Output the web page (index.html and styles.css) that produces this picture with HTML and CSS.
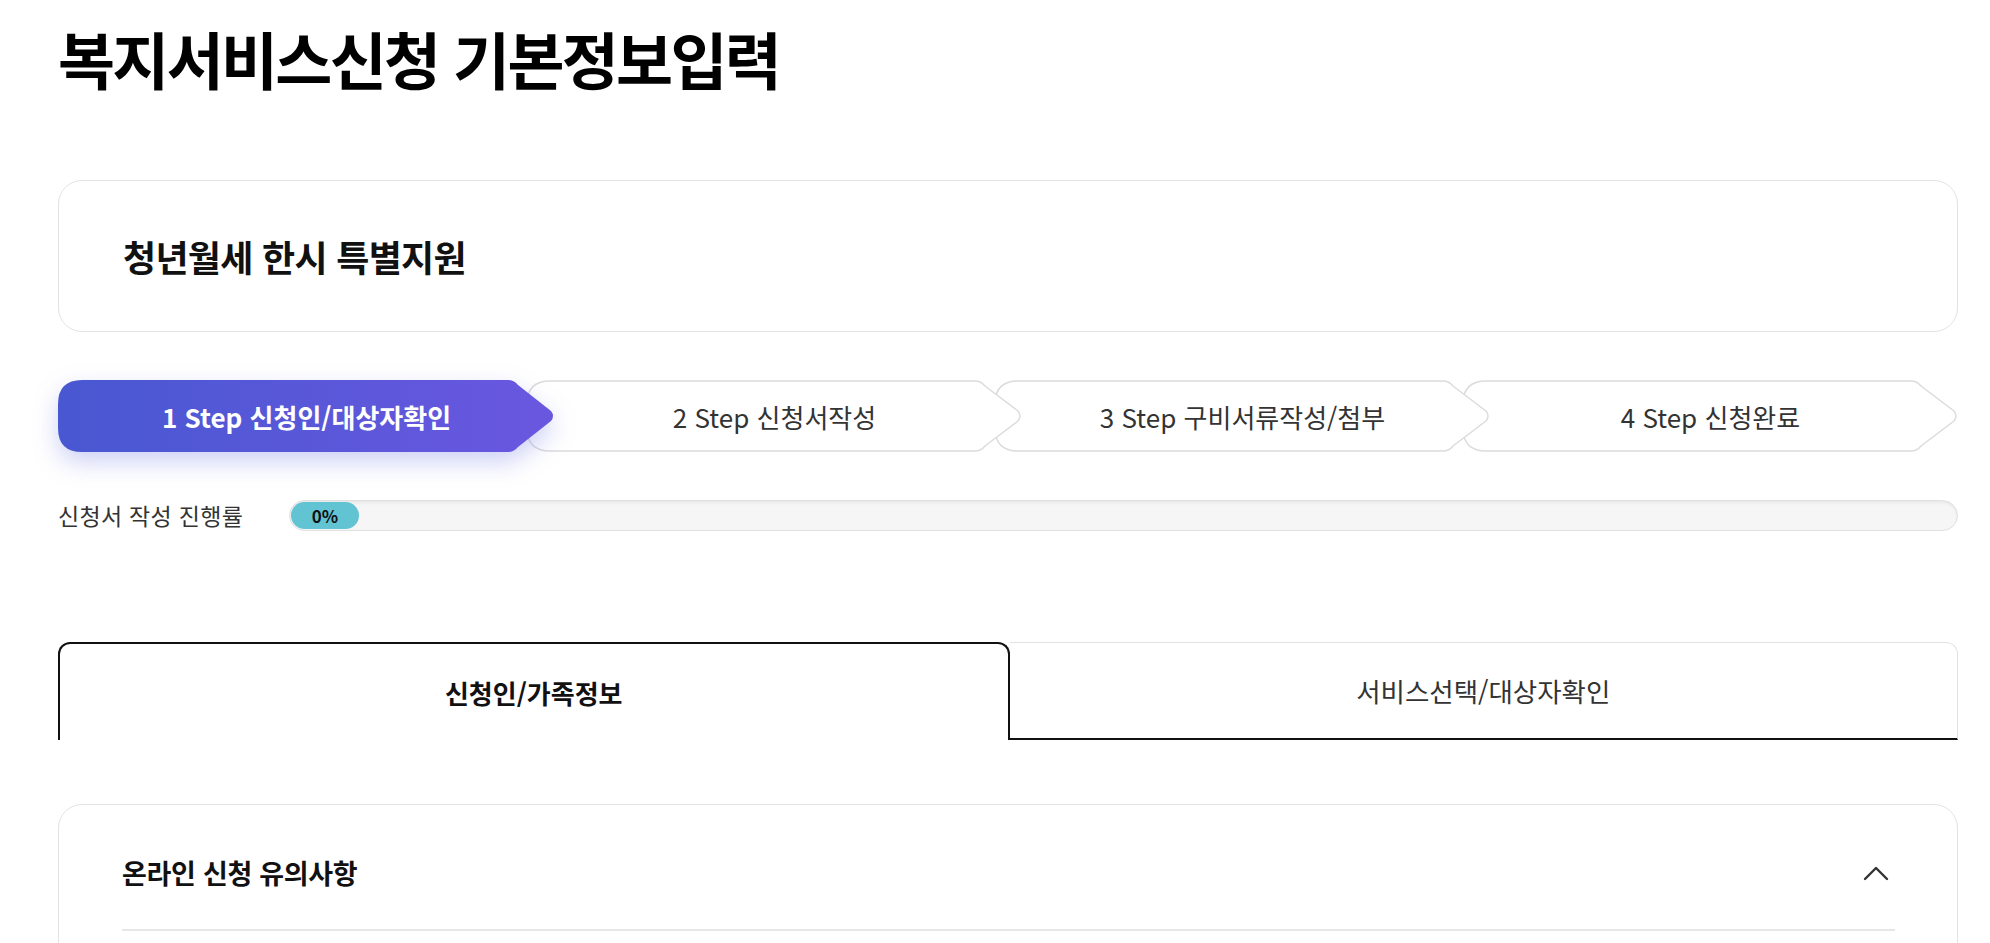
FILE: index.html
```html
<!DOCTYPE html>
<html lang="ko">
<head>
<meta charset="utf-8">
<title>복지서비스신청 기본정보입력</title>
<link rel="stylesheet" href="styles.css">
</head>
<body>
<main class="page">
  <h1 class="page-title">복지서비스신청 기본정보입력</h1>

  <section class="service-card">
    <h2 class="service-name">청년월세 한시 특별지원</h2>
  </section>

  <ol class="steps">
    <li class="step step-active">
      <svg class="step-shape" viewBox="0 0 497 72" aria-hidden="true">
        <defs>
          <linearGradient id="stepGrad" x1="0" y1="0" x2="1" y2="0">
            <stop offset="0" stop-color="#4858d1"/>
            <stop offset="1" stop-color="#6a57e0"/>
          </linearGradient>
        </defs>
        <path d="M24,0 H450 Q456,0 460,5 L493,31 Q497,36 493,41 L460,67 Q456,72 450,72 H24 Q0,72 0,48 V24 Q0,0 24,0 Z" fill="url(#stepGrad)"/>
      </svg>
      <span class="step-label">1 Step 신청인/대상자확인</span>
    </li>
    <li class="step">
      <svg class="step-shape" viewBox="0 0 497 72" aria-hidden="true">
        <path d="M24,1 H449 Q455,1 459,6 L492,31 Q496,36 492,41 L459,66 Q455,71 449,71 H24 Q1,71 1,48 V24 Q1,1 24,1 Z" fill="#fff" stroke="#dcdcdc" stroke-width="1.5"/>
      </svg>
      <span class="step-label">2 Step 신청서작성</span>
    </li>
    <li class="step">
      <svg class="step-shape" viewBox="0 0 497 72" aria-hidden="true">
        <path d="M24,1 H449 Q455,1 459,6 L492,31 Q496,36 492,41 L459,66 Q455,71 449,71 H24 Q1,71 1,48 V24 Q1,1 24,1 Z" fill="#fff" stroke="#dcdcdc" stroke-width="1.5"/>
      </svg>
      <span class="step-label">3 Step 구비서류작성/첨부</span>
    </li>
    <li class="step">
      <svg class="step-shape" viewBox="0 0 497 72" aria-hidden="true">
        <path d="M24,1 H449 Q455,1 459,6 L492,31 Q496,36 492,41 L459,66 Q455,71 449,71 H24 Q1,71 1,48 V24 Q1,1 24,1 Z" fill="#fff" stroke="#dcdcdc" stroke-width="1.5"/>
      </svg>
      <span class="step-label">4 Step 신청완료</span>
    </li>
  </ol>

  <div class="progress">
    <span class="progress-label">신청서 작성 진행률</span>
    <div class="progress-track">
      <div class="progress-fill" style="width:68px">0%</div>
    </div>
  </div>

  <div class="tabs">
    <button class="tab tab-active" type="button">신청인/가족정보</button>
    <button class="tab" type="button">서비스선택/대상자확인</button>
  </div>

  <section class="notice-card">
    <div class="notice-header">
      <h3 class="notice-title">온라인 신청 유의사항</h3>
      <svg class="notice-toggle" viewBox="0 0 26 16" aria-hidden="true">
        <path d="M2 14 L13 3 L24 14" fill="none" stroke="#333" stroke-width="2.4" stroke-linecap="round" stroke-linejoin="round"/>
      </svg>
    </div>
    <div class="notice-divider"></div>
  </section>
</main>
</body>
</html>
```

FILE: styles.css
```css
html, body {
  margin: 0;
  padding: 0;
  background: #fff;
}

body {
  font-family: "Noto Sans CJK KR", "Noto Sans", sans-serif;
  color: #111;
}

.page {
  padding: 27px 32px 0 58px;
}

.page-title {
  margin: 0;
  font-size: 62px;
  line-height: 62px;
  font-weight: 700;
  letter-spacing: -2.7px;
  color: #000;
}

.service-card {
  margin-top: 91px;
  height: 152px;
  box-sizing: border-box;
  border: 1px solid #e3e3e3;
  border-radius: 24px;
  display: flex;
  align-items: center;
  padding: 0 64px;
}

.service-name {
  margin: 0;
  font-size: 36px;
  font-weight: 700;
  letter-spacing: -0.7px;
  color: #111;
}

.steps {
  list-style: none;
  margin: 48px 0 0;
  padding: 0;
  display: flex;
}

.step {
  flex: none;
  width: 497px;
  height: 72px;
  display: grid;
  place-items: center;
}

.step + .step {
  margin-left: -29px;
}

.step:nth-child(1) { z-index: 4; }
.step:nth-child(2) { z-index: 3; }
.step:nth-child(3) { z-index: 2; }
.step:nth-child(4) { z-index: 1; }

.step > * {
  grid-area: 1 / 1;
}

.step-shape {
  display: block;
  width: 497px;
  height: 72px;
  z-index: 0;
}

.step-active .step-shape {
  filter: drop-shadow(0 10px 12px rgba(80, 90, 220, 0.28));
}

.step-label {
  z-index: 1;
  font-size: 26px;
  letter-spacing: 0;
  color: #333;
}

.step-active .step-label {
  color: #fff;
  font-weight: 700;
  letter-spacing: 0;
}

.progress {
  margin-top: 48px;
  height: 31px;
  display: flex;
  align-items: center;
}

.progress-label {
  flex: 0 0 231px;
  font-size: 23px;
  line-height: 31px;
  letter-spacing: 0.3px;
  color: #333;
}

.progress-track {
  flex: 1;
  height: 31px;
  box-sizing: border-box;
  border: 1px solid #e0e0e0;
  border-radius: 16px;
  background: #f6f6f6;
  box-shadow: inset 0 2px 3px rgba(0, 0, 0, 0.06);
  padding: 1px;
  display: flex;
}

.progress-fill {
  height: 100%;
  border-radius: 14px;
  background: #62c3d3;
  font-size: 17px;
  font-weight: 700;
  color: #111;
  display: flex;
  align-items: center;
  justify-content: center;
}

.tabs {
  margin-top: 111px;
  display: flex;
  height: 98px;
}

.tab {
  flex: 1;
  margin: 0;
  padding: 0;
  background: #fff;
  font-family: inherit;
  font-size: 26.5px;
  letter-spacing: 0;
  color: #333;
  border: 0;
  border-top: 1px solid #e3e3e3;
  border-right: 1px solid #e3e3e3;
  border-bottom: 2px solid #111;
  border-radius: 0 12px 0 0;
  cursor: pointer;
}

.tab-active {
  border: 2px solid #111;
  border-bottom: 0;
  border-radius: 12px 12px 0 0;
  font-weight: 700;
  color: #111;
  font-size: 26px;
}

.notice-card {
  margin-top: 64px;
  min-height: 400px;
  box-sizing: border-box;
  border: 1px solid #e3e3e3;
  border-radius: 24px;
  padding: 0 62px 0 63px;
}

.notice-header {
  display: flex;
  justify-content: space-between;
  align-items: center;
  padding: 44px 0 32px;
}

.notice-title {
  margin: 0;
  font-size: 27px;
  line-height: 48px;
  font-weight: 700;
  letter-spacing: -0.3px;
  color: #111;
}

.notice-toggle {
  width: 26px;
  height: 16px;
  margin-right: 6px;
}

.notice-divider {
  height: 2px;
  background: #e6e6e6;
}
```
